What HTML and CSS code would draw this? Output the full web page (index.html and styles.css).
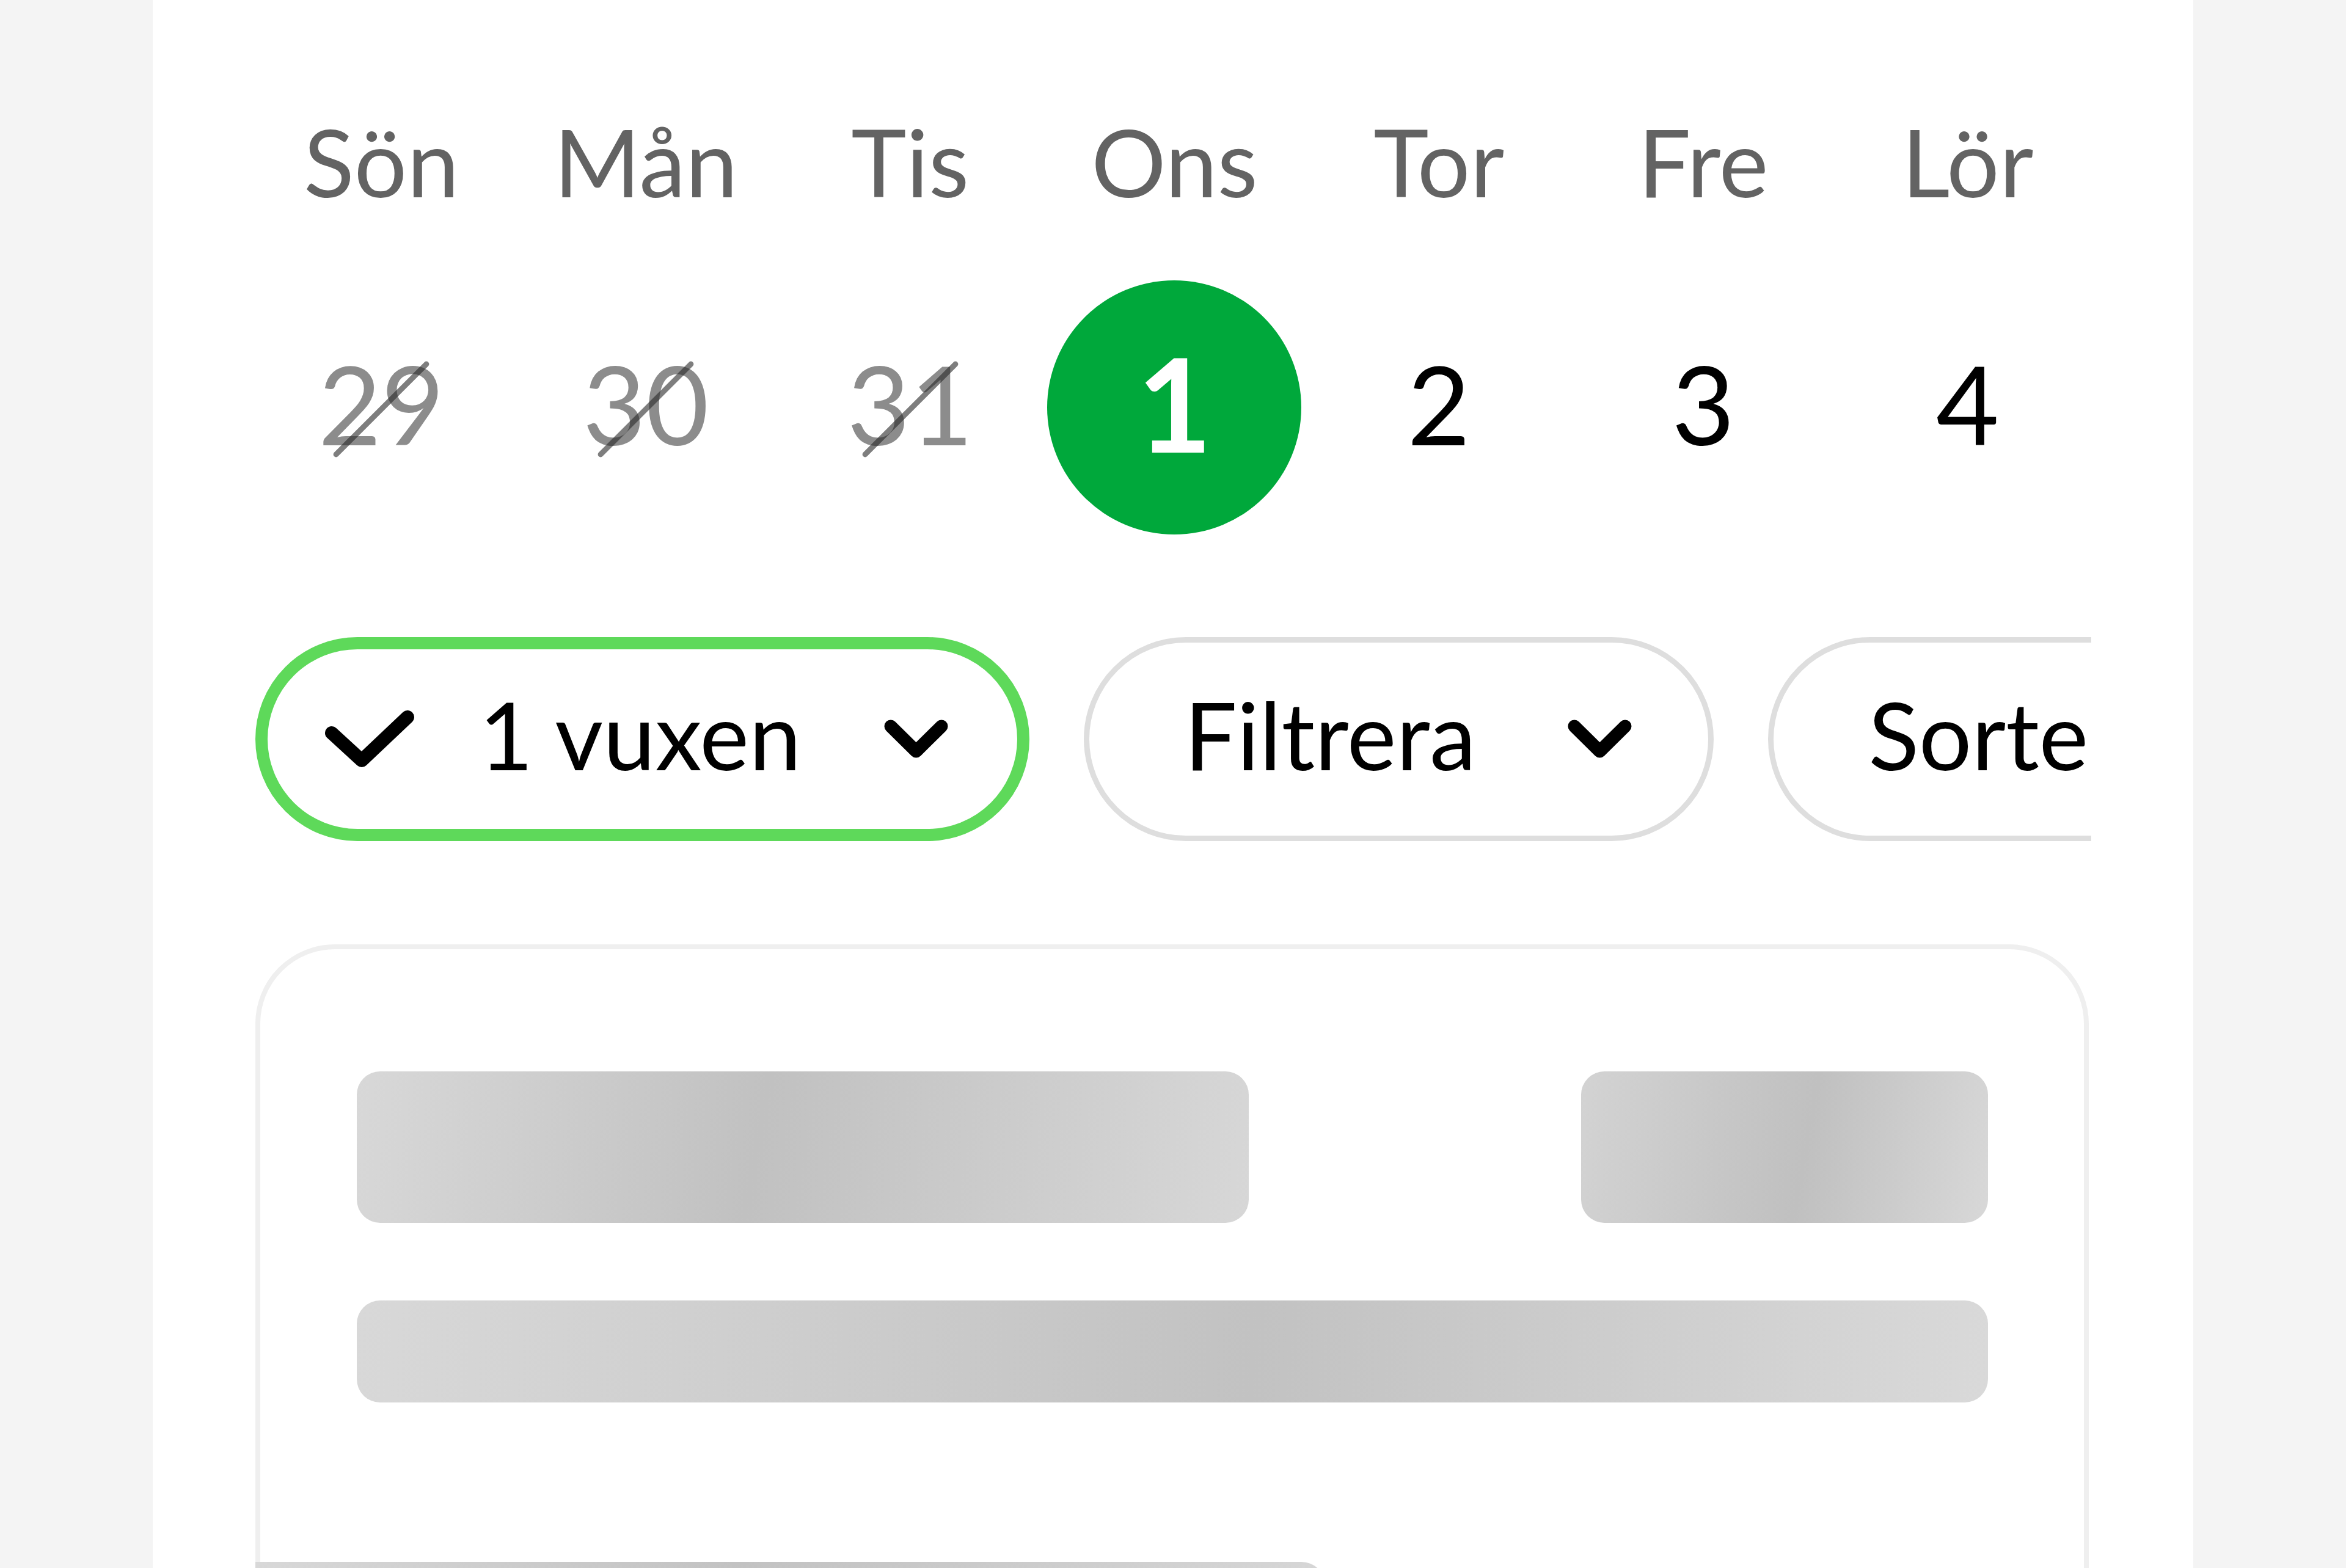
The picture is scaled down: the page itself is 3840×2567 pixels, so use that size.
FILE: index.html
```html
<!DOCTYPE html>
<html lang="sv">
<head>
<meta charset="utf-8">
<title>Välj avgång</title>
<link rel="stylesheet" href="styles.css">
</head>
<body>
<main class="panel">
  <div class="week">
    <div class="weekdays">
      <span>Sön</span><span>Mån</span><span>Tis</span><span>Ons</span><span>Tor</span><span>Fre</span><span>Lör</span>
    </div>
    <div class="dates">
      <span class="date past"><span class="num">29</span></span>
      <span class="date past"><span class="num">30</span></span>
      <span class="date past"><span class="num">31</span></span>
      <span class="date selected"><span class="num">1</span></span>
      <span class="date"><span class="num">2</span></span>
      <span class="date"><span class="num">3</span></span>
      <span class="date"><span class="num">4</span></span>
    </div>
  </div>

  <div class="chips">
    <button class="chip chip-active">
      <svg class="icon-check" width="146" height="95" viewBox="0 0 146 95" aria-hidden="true"><polyline points="11,37 60,82 135,11" fill="none" stroke="currentColor" stroke-width="22" stroke-linecap="round" stroke-linejoin="round"/></svg>
      <span class="chip-label">1 vuxen</span>
      <svg class="icon-chevron" width="105" height="64" viewBox="0 0 105 64" aria-hidden="true"><polyline points="11,11 52.5,52 94,11" fill="none" stroke="currentColor" stroke-width="21" stroke-linecap="round" stroke-linejoin="round"/></svg>
    </button>
    <button class="chip">
      <span class="chip-label">Filtrera</span>
      <svg class="icon-chevron" width="105" height="64" viewBox="0 0 105 64" aria-hidden="true"><polyline points="11,11 52.5,52 94,11" fill="none" stroke="currentColor" stroke-width="21" stroke-linecap="round" stroke-linejoin="round"/></svg>
    </button>
    <button class="chip">
      <span class="chip-label">Sortera</span>
      <svg class="icon-chevron" width="105" height="64" viewBox="0 0 105 64" aria-hidden="true"><polyline points="11,11 52.5,52 94,11" fill="none" stroke="currentColor" stroke-width="21" stroke-linecap="round" stroke-linejoin="round"/></svg>
    </button>
  </div>

  <section class="card">
    <div class="sk-row">
      <div class="sk sk-title"></div>
      <div class="sk sk-price"></div>
    </div>
    <div class="sk sk-line"></div>
    <div class="sk sk-footer"></div>
  </section>
</main>
</body>
</html>
```

FILE: styles.css
```css
html, body {
  margin: 0;
  height: 100%;
}

body {
  background: #f4f4f4;
  font-family: Lato, "Open Sans", "Liberation Sans", sans-serif;
  overflow: hidden;
}

.panel {
  width: 3340px;
  height: 100vh;
  margin: 0 auto;
  box-sizing: border-box;
  background: #fff;
  padding: 188px 171px 0 168px;
  overflow: hidden;
}

/* ---------- week strip ---------- */
.week {
  margin: 0 -18px 0 -10px;
}

.weekdays {
  display: grid;
  grid-template-columns: repeat(7, 1fr);
  font-size: 153px;
  line-height: 153px;
  color: #636363;
  text-align: center;
}

.dates {
  display: grid;
  grid-template-columns: repeat(7, 1fr);
  height: 416px;
  margin-top: 118px;
}

.date {
  position: relative;
  display: flex;
  align-items: center;
  justify-content: center;
}

.num {
  display: flex;
  align-items: center;
  justify-content: center;
  font-size: 178px;
  line-height: 1;
  color: #000;
  padding-bottom: 14px;
}

.past .num {
  color: #8c8c8c;
}

.past::after {
  content: "";
  position: absolute;
  left: 50%;
  top: 50%;
  width: 218px;
  height: 9px;
  margin-top: 3px;
  border-radius: 5px;
  background: rgba(40, 40, 40, 0.6);
  transform: translate(-50%, -50%) rotate(-45deg);
}

.selected .num {
  width: 416px;
  height: 416px;
  box-sizing: border-box;
  border-radius: 50%;
  background: #00a83b;
  color: #fff;
  font-weight: 700;
  font-size: 212px;
  padding-bottom: 16px;
}

/* ---------- chips ---------- */
.chips {
  display: flex;
  gap: 89px;
  margin: 168px -4px 0 0;
  overflow: hidden;
}

.chip {
  flex: none;
  display: flex;
  align-items: center;
  height: 334px;
  box-sizing: border-box;
  border: 9px solid #dedede;
  border-radius: 167px;
  background: #fff;
  color: #000;
  font: inherit;
  font-size: 153px;
  padding: 0 125px 0 155px;
}

.chip-active {
  border: 20px solid #5ed95a;
  padding: 0 113px 0 94px;
}

.chip-label {
  line-height: 1;
  padding-bottom: 16px;
  margin-right: 150px;
}

.chip-active .chip-label {
  margin-right: 136px;
}

.icon-check {
  margin-right: 106px;
}

.icon-check,
.icon-chevron {
  flex: none;
  display: block;
}

/* ---------- skeleton card ---------- */
.card {
  margin-top: 169px;
  border: 8px solid #efefef;
  border-radius: 130px;
  padding: 200px 157px 0 158px;
}

.sk-row {
  display: flex;
  justify-content: space-between;
}

.sk {
  border-radius: 38px;
  background: linear-gradient(100deg, #d8d8d8 0%, #c1c1c1 45%, #d7d7d7 100%);
}

.sk-title {
  width: 1460px;
  height: 248px;
}

.sk-price {
  width: 666px;
  height: 248px;
  background: linear-gradient(100deg, #d3d3d3 0%, #c0c0c0 55%, #d8d8d8 100%);
}

.sk-line {
  height: 167px;
  margin-top: 127px;
  background: linear-gradient(95deg, #d8d8d8 0%, #c2c2c2 55%, #d9d9d9 100%);
}

.sk-footer {
  width: 1752px;
  height: 240px;
  margin: 261px 0 0 -166px;
  border-radius: 0 40px 0 0;
  background: linear-gradient(90deg, #d8d8d8 0%, #c2c2c2 45%, #d6d6d6 100%);
}
```
